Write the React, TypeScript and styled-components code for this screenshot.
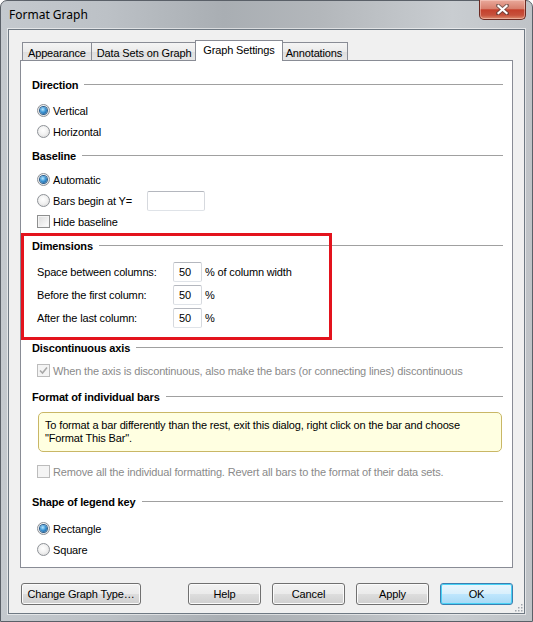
import React from 'react'
import styled, { createGlobalStyle, css } from 'styled-components'

const GlobalStyle = createGlobalStyle`
  html, body {
    margin: 0;
    padding: 0;
    background: #ffffff;
  }
  body {
    font-family: "Liberation Sans", Arial, sans-serif;
    font-size: 11px;
    letter-spacing: -0.15px;
    color: #000;
  }
`

const Window = styled.div`
  position: relative;
  width: 533px;
  height: 622px;
  box-sizing: border-box;
  border: 1px solid #5a6068;
  border-radius: 7px 7px 0 0;
  padding: 0 7px 7px 7px;
  display: flex;
  flex-direction: column;
  background: linear-gradient(90deg, #c4c9ce 0%, #bcc1c6 20%, #a9aeb3 42%, #b3b7bb 60%, #c9cdd1 85%, #bfc3c7 100%);
`

const TitleBar = styled.div`
  height: 28px;
  display: flex;
  align-items: center;
  font-family: "Noto Sans", "Open Sans", sans-serif;
  font-size: 12px;
  letter-spacing: 0;
  color: #000;

  .title {
    padding-left: 1px;
    margin-top: -1px;
  }
`

const CloseButton = styled.div`
  margin-left: auto;
  align-self: flex-start;
  margin-top: -1px;
  margin-right: -1px;
  width: 47px;
  height: 20px;
  box-sizing: border-box;
  border: 1px solid #6b2a22;
  border-top: none;
  border-radius: 0 0 5px 5px;
  background: linear-gradient(180deg, #e9a99b 0%, #d8806e 45%, #c4402c 52%, #c7513c 80%, #dd8e70 100%);
  box-shadow: inset 0 0 0 1px rgba(255, 220, 210, 0.45);
  display: flex;
  align-items: center;
  justify-content: center;
`

const Client = styled.div`
  position: relative;
  flex: 1;
  background: #f0f0f0;
  border: 1px solid #6f7983;
  box-shadow: 0 0 0 1px rgba(255, 255, 255, 0.55);
  padding: 10px 11px 0 11px;
  display: flex;
  flex-direction: column;
`

const TabRow = styled.div`
  display: flex;
  align-items: flex-end;
  height: 20px;
  padding-left: 2px;
`

const Tab = styled.div<{ $active?: boolean }>`
  position: relative;
  height: 18px;
  box-sizing: border-box;
  padding: 0 5px;
  border: 1px solid #898c95;
  border-bottom: none;
  margin-left: -1px;
  background: linear-gradient(180deg, #f4f4f4 0%, #ebebeb 50%, #dedede 51%, #e6e6e6 100%);
  display: flex;
  align-items: center;
  padding-top: 2px;
  white-space: nowrap;

  &:first-child {
    margin-left: 0;
  }

  ${p =>
    p.$active &&
    css`
      height: 21px;
      margin: 0 -2px -1px -2px;
      padding: 0 7px 2px 7px;
      background: #ffffff;
      z-index: 1;
    `}
`

const Panel = styled.div`
  height: 508px;
  box-sizing: border-box;
  background: #ffffff;
  border: 1px solid #898c95;
  padding: 0 9px 0 11px;
`

const Header = styled.div<{ $mt: number }>`
  margin-top: ${p => p.$mt}px;
  height: 16px;
  display: flex;
  align-items: center;
  gap: 6px;
  font-weight: bold;

  &::after {
    content: '';
    flex: 1;
    height: 1px;
    background: #a0a0a0;
    margin-top: -1px;
  }
`

const Group = styled.div<{ $mt: number }>`
  margin-top: ${p => p.$mt}px;
  display: flex;
  flex-direction: column;
`

const Row = styled.div<{ $h?: number; $disabled?: boolean }>`
  height: ${p => p.$h ?? 21}px;
  display: flex;
  align-items: center;
  gap: 3px;
  padding-left: 5px;
  color: ${p => (p.$disabled ? '#8a8a8a' : '#000')};
  white-space: nowrap;
`

const Radio = styled.span<{ $checked?: boolean }>`
  position: relative;
  width: 13px;
  height: 13px;
  box-sizing: border-box;
  border-radius: 50%;
  border: 1px solid #8e9297;
  background: radial-gradient(circle at 45% 40%, #ffffff 0%, #f2f2f2 45%, #d5d5d5 100%);
  flex-shrink: 0;

  ${p =>
    p.$checked &&
    css`
      &::after {
        content: '';
        position: absolute;
        left: 2px;
        top: 2px;
        width: 7px;
        height: 7px;
        border-radius: 50%;
        background: radial-gradient(circle at 40% 35%, #b8e8ff 0%, #3e97d6 45%, #0d4a85 100%);
        box-shadow: 0 0 0 1px #2a5d8c;
      }
    `}
`

const Check = styled.span<{ $disabled?: boolean }>`
  width: 13px;
  height: 13px;
  box-sizing: border-box;
  border: 1px solid ${p => (p.$disabled ? '#bcbcbc' : '#8e8f8f')};
  background: ${p =>
    p.$disabled ? '#f4f4f4' : 'linear-gradient(135deg, #dcdcdc 0%, #f0f0f0 60%, #ffffff 100%)'};
  box-shadow: inset 0 0 0 1px #f4f4f4;
  display: flex;
  align-items: center;
  justify-content: center;
  flex-shrink: 0;
`

const Label = styled.span<{ $w?: number }>`
  ${p => p.$w && `width: ${p.$w}px;`}
  flex-shrink: 0;
`

const TextBox = styled.div<{ $w: number }>`
  width: ${p => p.$w}px;
  height: 20px;
  box-sizing: border-box;
  border: 1px solid;
  border-color: #b4b7be #d6d9de #dfe3e8 #d6d9de;
  border-radius: 2px;
  background: #ffffff;
  padding-left: 5px;
  display: flex;
  align-items: center;
`

const Highlight = styled.div`
  position: relative;
  padding: 6px 0 11px 0;

  &::after {
    content: '';
    position: absolute;
    left: -11px;
    top: 1px;
    bottom: 0;
    width: 311px;
    box-sizing: border-box;
    border: 3px solid #e3131d;
    pointer-events: none;
  }
`

const Note = styled.div`
  margin: 7px 1px 0 6px;
  height: 40px;
  box-sizing: border-box;
  border: 1px solid #c9b766;
  border-radius: 5px;
  background: #ffffe1;
  padding: 6px 6px 0 6px;
  line-height: 13px;
`

const ButtonBar = styled.div`
  margin-top: 15px;
  display: flex;
  align-items: center;
  gap: 11px;
`

const Button = styled.div<{ $w?: number; $default?: boolean }>`
  width: ${p => p.$w ?? 73}px;
  height: 22px;
  box-sizing: border-box;
  border: 1px solid #707070;
  border-radius: 3px;
  background: linear-gradient(180deg, #f2f2f2 0%, #ebebeb 48%, #dddddd 52%, #cfcfcf 100%);
  box-shadow: inset 0 0 0 1px #fbfbfb;
  display: flex;
  align-items: center;
  justify-content: center;
  white-space: nowrap;

  &:first-child {
    margin-left: 1px;
    margin-right: auto;
  }

  ${p =>
    p.$default &&
    css`
      border-color: #3c7fb1;
      background: linear-gradient(180deg, #eaf6fd 0%, #d9f0fc 48%, #bee6fd 52%, #a7d9f5 100%);
      box-shadow: inset 0 0 0 1px #48d2f6;
    `}
`

const Grip = styled.svg`
  position: absolute;
  right: 1px;
  bottom: 1px;
`

const CheckMark = () => (
  <svg width="11" height="11" viewBox="0 0 11 11">
    <path d="M2 5.5 L4.5 8 L9 2.5" fill="none" stroke="#a8a8a8" strokeWidth="1.6" />
  </svg>
)

const CloseGlyph = () => (
  <svg width="13" height="11" viewBox="0 0 13 11">
    <path d="M2 1.5 L11 9.5 M11 1.5 L2 9.5" stroke="#3a3a3a" strokeWidth="4" strokeLinecap="square" opacity="0.55" />
    <path d="M2.5 2 L10.5 9 M10.5 2 L2.5 9" stroke="#ffffff" strokeWidth="2.2" strokeLinecap="square" />
  </svg>
)

const App = () => {
  return (
    <>
      <GlobalStyle />
      <Window>
        <TitleBar>
          <span className="title">Format Graph</span>
          <CloseButton>
            <CloseGlyph />
          </CloseButton>
        </TitleBar>
        <Client>
          <TabRow>
            <Tab>Appearance</Tab>
            <Tab>Data Sets on Graph</Tab>
            <Tab $active>Graph Settings</Tab>
            <Tab>Annotations</Tab>
          </TabRow>
          <Panel>
            <Header $mt={16}>Direction</Header>
            <Group $mt={7}>
              <Row>
                <Radio $checked />
                <Label>Vertical</Label>
              </Row>
              <Row>
                <Radio />
                <Label>Horizontal</Label>
              </Row>
            </Group>

            <Header $mt={6}>Baseline</Header>
            <Group $mt={5}>
              <Row>
                <Radio $checked />
                <Label>Automatic</Label>
              </Row>
              <Row>
                <Radio />
                <Label $w={91}>Bars begin at Y=</Label>
                <TextBox $w={58} />
              </Row>
              <Row>
                <Check />
                <Label>Hide baseline</Label>
              </Row>
            </Group>

            <Highlight>
              <Header $mt={0}>Dimensions</Header>
              <Group $mt={6}>
                <Row $h={23}>
                  <Label $w={133}>Space between columns:</Label>
                  <TextBox $w={29}>50</TextBox>
                  <Label>% of column width</Label>
                </Row>
                <Row $h={23}>
                  <Label $w={133}>Before the first column:</Label>
                  <TextBox $w={29}>50</TextBox>
                  <Label>%</Label>
                </Row>
                <Row $h={23}>
                  <Label $w={133}>After the last column:</Label>
                  <TextBox $w={29}>50</TextBox>
                  <Label>%</Label>
                </Row>
              </Group>
            </Highlight>

            <Header $mt={0}>Discontinuous axis</Header>
            <Group $mt={4}>
              <Row $disabled>
                <Check $disabled>
                  <CheckMark />
                </Check>
                <Label>When the axis is discontinuous, also make the bars (or connecting lines) discontinuous</Label>
              </Row>
            </Group>

            <Header $mt={8}>Format of individual bars</Header>
            <Note>
              To format a bar differently than the rest, exit this dialog, right click on the bar and choose
              <br />
              "Format This Bar".
            </Note>
            <Group $mt={9}>
              <Row $disabled>
                <Check $disabled />
                <Label>Remove all the individual formatting. Revert all bars to the format of their data sets.</Label>
              </Row>
            </Group>

            <Header $mt={12}>Shape of legend key</Header>
            <Group $mt={8}>
              <Row>
                <Radio $checked />
                <Label>Rectangle</Label>
              </Row>
              <Row>
                <Radio />
                <Label>Square</Label>
              </Row>
            </Group>
          </Panel>
          <ButtonBar>
            <Button $w={120}>Change Graph Type…</Button>
            <Button>Help</Button>
            <Button>Cancel</Button>
            <Button>Apply</Button>
            <Button $default>OK</Button>
          </ButtonBar>
          <Grip width="9" height="9" viewBox="0 0 9 9">
            {[
              [7, 1],
              [7, 4],
              [4, 4],
              [7, 7],
              [4, 7],
              [1, 7],
            ].map(([x, y]) => (
              <rect key={`${x}-${y}`} x={x} y={y} width="1.5" height="1.5" fill="#a0a6ad" />
            ))}
          </Grip>
        </Client>
      </Window>
    </>
  )
}

export default App
